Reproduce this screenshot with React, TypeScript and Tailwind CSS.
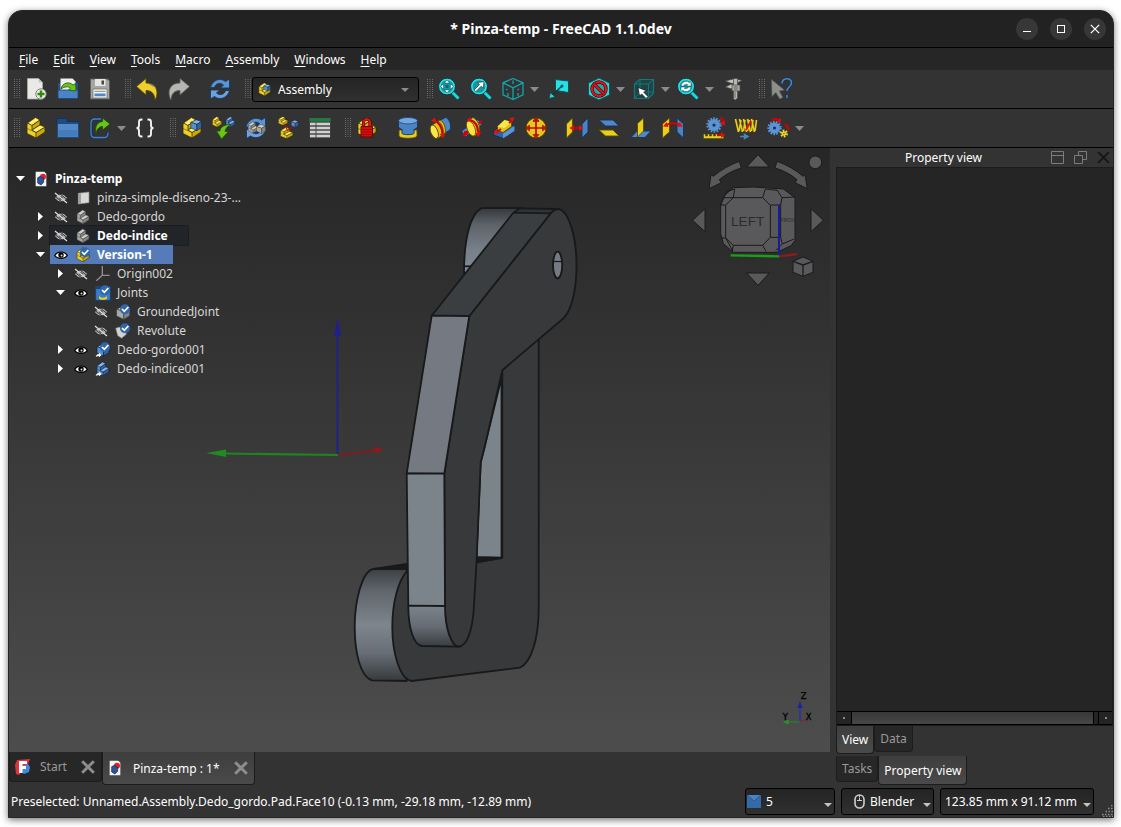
import React from 'react';

type Kids = { children: React.ReactNode };

const YELLOW = ['#fdee6a', '#ecd02a', '#c9a90e', '#3a3000'];
const BLUE = ['#8db6e6', '#568fd0', '#33639f', '#0b1d35'];
const GRAY = ['#cfcfcd', '#a9a9a6', '#858583', '#3a3a39'];

function Icon({ children, size = 24 }: Kids & { size?: number }) {
  return (
    <svg width={size} height={size} viewBox="0 0 24 24" fill="none" aria-hidden="true" className="shrink-0">
      {children}
    </svg>
  );
}

function Block({ c, t }: { c: string[]; t?: string }) {
  return (
    <g transform={t} stroke={c[3]} strokeWidth="0.8" strokeLinejoin="round">
      <path d="M3 8V17.500l9 4.500 9-6V11l-5-2V4.500L11.500 1.500z" fill={c[1]} />
      <path d="M12 22l9-6v-5l-9 5.500z" fill={c[2]} />
      <path d="M3.500 7L11.500 1.500 16 4 8 9.500z" fill={c[0]} />
      <path d="M8 9.500L16 4v5L8 14z" fill={c[2]} />
      <path d="M8 14l8-5 5 2-9 5.500z" fill={c[0]} />
      <path d="M3 12.500l9 4" strokeWidth="0.500" />
    </g>
  );
}

function Cube({ c, t }: { c: string[]; t?: string }) {
  return (
    <g transform={t} stroke={c[3]} strokeWidth="0.9" strokeLinejoin="round">
      <path d="M3 7l9-4 9 3-8 4.500z" fill={c[0]} />
      <path d="M3 7l10 3.500V21L3 16.500z" fill={c[1]} />
      <path d="M13 10.500L21 6v10l-8 5z" fill={c[2]} />
    </g>
  );
}

function Gear({ cx, cy, r, fill, stroke }: { cx: number; cy: number; r: number; fill: string; stroke: string }) {
  return (
    <g>
      <circle cx={cx} cy={cy} r={r} stroke={fill} strokeWidth="2.400" strokeDasharray="1.600 1.300" />
      <circle cx={cx} cy={cy} r={r - 0.5} fill={fill} />
      <circle cx={cx} cy={cy} r={r * 0.25} fill={stroke} />
    </g>
  );
}

function Lens({ children }: Kids) {
  return (
    <Icon>
      <path d="M15 15l7 7" stroke="#0b4a4e" strokeWidth="4.200" />
      <path d="M15 15l6.500 6.500" stroke="#1fd5da" strokeWidth="2.800" />
      <circle cx="10" cy="9.500" r="8.300" fill="#12989e" stroke="#0a3f43" strokeWidth="1" />
      <circle cx="10" cy="9.500" r="7.100" stroke="#30dfe3" strokeWidth="1.500" />
      {children}
    </Icon>
  );
}

const icons = {
  newDoc: (
    <Icon>
      <path d="M3.500 1.500h11l4 4V22h-15z" fill="#e9eae6" stroke="#a9aaa6" strokeWidth="0.800" />
      <path d="M14.500 1.500l4 4h-4z" fill="#c4c6c1" />
      <circle cx="17" cy="17" r="5.200" fill="#eceeea" stroke="#7e807b" />
      <path d="M17 13.500v7M13.500 17h7" stroke="#2f8a0a" strokeWidth="2.400" />
    </Icon>
  ),
  open: (
    <Icon>
      <path d="M2 6h20v15.500H2z" fill="#24508c" />
      <path d="M4.500 1.500h12l3 3V15h-15z" fill="#f0f1ee" />
      <path d="M2 13h20v8.500H2z" fill="#4a83c6" stroke="#1c4478" strokeWidth="0.800" />
      <path d="M5 12c1-6 8-8 12-4l2.500-1.500.5 7.500-7.500-1 2-1.800c-2-2.200-6-1.700-9.500.8z" fill="#6cc417" stroke="#23600a" strokeWidth="0.900" />
    </Icon>
  ),
  save: (
    <Icon>
      <path d="M2.500 2h17l2 2v18h-19z" fill="#a4a6a1" stroke="#5d5f5a" />
      <path d="M7 2h10.500v7H7z" fill="#e6e7e4" />
      <path d="M13.500 3.500h2.500v4h-2.500z" fill="#454743" />
      <path d="M5 12h14v9H5z" fill="#f2f3f1" stroke="#6b6d68" strokeWidth="0.700" />
      <path d="M6.500 14.300h11" stroke="#8b8d88" />
      <path d="M6.500 16.500h11v2.800h-11z" fill="#4d86cc" />
    </Icon>
  ),
  undo: (
    <Icon>
      <path d="M1.500 9.500L11 1.500V6c7 0 11 4 11 10 0 2.500-.8 5-2 7-.5-6-3-9.500-9-9.500v4.500z" fill="#efcf2a" stroke="#5c4a00" strokeWidth="0.900" />
      <path d="M13 6.500c4 .5 7 2 8.500 5L17 9z" fill="#85857c" />
    </Icon>
  ),
  redo: (
    <Icon>
      <path d="M22.500 9.500L13 1.500V6C6 6 2 10 2 16c0 2.500.8 5 2 7 .5-6 3-9.500 9-9.500v4.500z" fill="#b4b6b2" stroke="#5b5d59" strokeWidth="0.900" />
    </Icon>
  ),
  refresh: (
    <Icon>
      <path d="M2.500 10.500C4 3.500 12 0 17.500 4.500L21.500 2v9h-9l3-3c-3.500-3-8-1.500-9 2.500z" fill="#5b93d3" stroke="#173a66" strokeWidth="0.900" />
      <path d="M21.500 13.500c-1.500 7-9.500 10.500-15 6L2.500 22v-9h9l-3 3c3.500 3 8 1.500 9-2.500z" fill="#6fa2dc" stroke="#173a66" strokeWidth="0.900" />
    </Icon>
  ),
  fitAll: (
    <Lens>
      <path d="M10 3l2.500 3h-5zM10 16l2.500-3h-5zM3.500 9.500l3-2.500v5zM16.500 9.500l-3-2.500v5z" fill="#fff" stroke="#134" strokeWidth="0.400" />
      <path d="M8.500 8h3v3h-3z" fill="#0a6a70" />
    </Lens>
  ),
  fitSelection: (
    <Lens>
      <path d="M5 13l5.500-5.500-2-2 6.500-.8-.8 6.500-2-2L6.700 14.700z" fill="#fff" stroke="#123" strokeWidth="0.600" />
    </Lens>
  ),
  isoCube: (
    <Icon>
      <path d="M12 1.500l10 4.300v12L12 22.500 2 17.800v-12zM2 5.800l10 5 10-5M12 10.800v11.700" stroke="#12a5ab" strokeWidth="1.300" />
      <path d="M12 3.500v3.500M5 12l1.500 1M18 12l-1.500 1M7 16v3M17 16v3" stroke="#12a5ab" strokeWidth="1.300" />
    </Icon>
  ),
  alignView: (
    <Icon>
      <path d="M8.500 2.500L21.500 4v11.500l-13-2z" fill="#27dfe4" stroke="#0a5357" />
      <path d="M15.500 8.500L5.500 18" stroke="#063c3f" strokeWidth="1.300" />
      <path d="M2 21.500l1.500-6 4.500 4.500z" fill="#27cfd4" stroke="#0a4144" strokeWidth="0.700" />
      <circle cx="15" cy="9" r="1.500" fill="#0a5357" />
    </Icon>
  ),
  drawStyle: (
    <Icon>
      <path d="M12 1l10.500 5v12L12 23 1.500 18V6z" fill="#25d8de" stroke="#0a5357" />
      <circle cx="12" cy="12" r="7" fill="#1aa9af" stroke="#4a0000" strokeWidth="3.400" />
      <circle cx="12" cy="12" r="7" stroke="#e0141a" strokeWidth="2.200" />
      <path d="M7 7l10 10" stroke="#4a0000" strokeWidth="3.200" />
      <path d="M7 7l10 10" stroke="#e0141a" strokeWidth="2.200" />
    </Icon>
  ),
  selectBox: (
    <Icon>
      <path d="M2.500 7l5-4.500h14V16l-5 5.500h-14z" fill="#1e4446" stroke="#13787c" strokeWidth="1.200" />
      <path d="M2.500 7h14v14.500M16.500 7l5-4.500M8 3v12l-5 6M8 15h13" stroke="#13787c" strokeWidth="1" />
      <path d="M6 10.500l1.500 8.500 2.200-2 4.300 4.500 2-2-4.300-4.300 2.800-1.400z" fill="#fff" stroke="#111" strokeWidth="0.700" />
    </Icon>
  ),
  zoomSync: (
    <Lens>
      <path d="M5 9a5 5 0 018.500-3.200L15 4.500v4.500h-4.500l1.300-1.300A3 3 0 007.500 9zM15 10a5 5 0 01-8.500 3.200L5 14.500V10h4.500l-1.300 1.300A3 3 0 0012.500 10z" fill="#fff" stroke="#0a5357" strokeWidth="0.500" />
    </Lens>
  ),
  caliper: (
    <Icon>
      <path d="M11.500 1.500h4V21l-2 2-2-1z" fill="#b6b8b3" stroke="#4a4b48" strokeWidth="0.700" />
      <path d="M3.500 4l8-2v4.500l-3-.5zM3.500 10l5-2.500h3V12l-3-.5zM15.500 2.500l4.500 1-4.500 2z" fill="#c4c6c1" stroke="#4a4b48" strokeWidth="0.600" />
      <path d="M10 8h8v6h-8z" fill="#a5a7a2" stroke="#4a4b48" strokeWidth="0.700" />
      <path d="M12 16h2M12 18h2M12 20h2M12 10h3.500M12 12h3.500" stroke="#555753" strokeWidth="0.800" />
    </Icon>
  ),
  whatsThis: (
    <Icon>
      <path d="M2.500 2.500l.5 17 3.800-4 4 6.500 3-1.700-3.500-6.300 5-1z" fill="#8d8f8b" stroke="#5a5b58" strokeWidth="0.700" />
      <path d="M13 6.500c0-6 9.500-6.500 9.500-.8 0 4-4.500 4-4.500 8.300M18 18v3" stroke="#16325a" strokeWidth="3" />
      <path d="M13 6.500c0-6 9.500-6.500 9.500-.8 0 4-4.500 4-4.500 8.300M18 18v3" stroke="#4f86c6" strokeWidth="1.500" />
    </Icon>
  ),
  part: (
    <Icon>
      <Block c={YELLOW} />
    </Icon>
  ),
  folder: (
    <Icon>
      <path d="M1 2.500h9l1.500 3H23v5H1z" fill="#1f4a86" stroke="#12305c" strokeWidth="0.800" />
      <path d="M1.500 7.500h21v14h-21z" fill="#5289c7" stroke="#1e4a83" />
      <path d="M2.500 14h19v6.500h-19z" fill="#447bbb" />
    </Icon>
  ),
  link: (
    <Icon>
      <path d="M13 3H6.500A3.500 3.500 0 003 6.500V18a3.500 3.500 0 003.500 3.500h10A3.500 3.500 0 0020 18v-1.500" stroke="#16325a" strokeWidth="3" />
      <path d="M13 3H6.500A3.500 3.500 0 003 6.500V18a3.500 3.500 0 003.500 3.500h10A3.500 3.500 0 0020 18v-1.500" stroke="#4a80bd" strokeWidth="1.300" />
      <path d="M8 17.500C6.500 10 9.500 6 14.500 5.500V2L22 8l-7.500 6v-3.500C11.500 10.500 9 12.500 8 17.500z" fill="#6cc417" stroke="#1d5208" strokeWidth="0.900" />
    </Icon>
  ),
  braces: (
    <Icon>
      <path d="M9.500 3.500H8.500C6.500 3.500 6 4.300 6 6v3.200C6 11 5.200 12 3.500 12c1.700 0 2.500 1 2.500 2.800V18c0 1.700.5 2.500 2.500 2.500h1M14.500 3.500h1C17.500 3.500 18 4.300 18 6v3.200c0 1.800.8 2.800 2.500 2.800-1.700 0-2.500 1-2.500 2.800V18c0 1.700-.5 2.500-2.500 2.500h-1" stroke="#f2f2f2" strokeWidth="1.900" />
    </Icon>
  ),
  assembly: (
    <Icon>
      <Block c={YELLOW} />
      <Cube c={BLUE} t="translate(9 2) scale(.6)" />
    </Icon>
  ),
  insert: (
    <Icon>
      <Block c={YELLOW} t="translate(-1 0) scale(.5)" />
      <Block c={BLUE} t="translate(12.500 0) scale(.5)" />
      <path d="M4.500 15h3.500c0-3 3-6.500 11-6.500-4 2-5.500 4-6 7h3.500L9.500 23z" fill="#6cc417" stroke="#1d5208" strokeWidth="0.800" />
    </Icon>
  ),
  solve: (
    <Icon>
      <path d="M2 11C3.500 3.500 12 0 17.500 4L21.500 1.500v9h-9l3-3c-3.500-2.500-8-1-9 3.500z" fill="#5b93d3" stroke="#173a66" strokeWidth="0.900" />
      <path d="M22 13c-1.500 7.500-10 11-15.500 7L2.500 22.500v-9h9l-3 3c3.500 2.500 8 1 9-3.500z" fill="#6fa2dc" stroke="#173a66" strokeWidth="0.900" />
      <Block c={GRAY} t="translate(2.500 5) scale(.55)" />
      <Cube c={GRAY} t="translate(11 7) scale(.5)" />
    </Icon>
  ),
  explode: (
    <Icon>
      <Block c={YELLOW} t="translate(1 0) scale(.5 .42)" />
      <Cube c={BLUE} t="translate(14 3) scale(.4)" />
      <Block c={YELLOW} t="translate(2.500 10.500) scale(.68 .55)" />
      <path d="M8.500 8l3 6.500 6-4.500" stroke="#d40000" strokeWidth="1" />
    </Icon>
  ),
  bom: (
    <Icon>
      <path d="M1.500 2h21v20h-21z" fill="#4a4a4a" />
      <path d="M1.500 2h21v3.500h-21z" fill="#1f7a45" />
      <path d="M2 8h20M2 12h20M2 16h20M2 20h20" stroke="#d0d0d4" strokeWidth="2.600" />
      <path d="M8 6.500v15.500" stroke="#4a4a4a" strokeWidth="1" />
    </Icon>
  ),
  ground: (
    <Icon>
      <Block c={YELLOW} />
      <path d="M8.500 11V6.500a3 3 0 016.500 0V11" stroke="#5e0000" strokeWidth="3.200" />
      <path d="M8.500 11V6.500a3 3 0 016.500 0V11" stroke="#e01818" strokeWidth="1.900" />
      <path d="M6 10.500h11.500v10.500H6z" fill="#cf1010" stroke="#6d0000" />
      <path d="M7 13.500h9.500M7 16h9.500M7 18.500h9.500" stroke="#a00000" strokeWidth="0.800" />
    </Icon>
  ),
  fixed: (
    <Icon>
      <path d="M3 14h18v6c0 3-18 3-18 0z" fill="#e8cf1f" stroke="#5c4a00" strokeWidth="0.900" />
      <path d="M2.500 4.500v6c0 2 3.500 2.800 3.500 2.800v4c0 1.800 12 1.800 12 0v-4s3.500-.8 3.500-2.800v-6z" fill="#4a83c4" stroke="#14325c" strokeWidth="0.900" />
      <ellipse cx="12" cy="4.700" rx="9.500" ry="3.200" fill="#75a6e0" stroke="#1d467b" strokeWidth="0.800" />
    </Icon>
  ),
  revolute: (
    <Icon>
      <path d="M11 5l6.500-3.500c3.500.5 6.500 8 4.500 12.500L16 17.500z" fill="#4f88ca" stroke="#14325c" strokeWidth="0.900" />
      <path d="M3.500 9.500L12 4c4 1.500 6.500 9 5 13.500L9.500 22.500z" fill="#dfc21a" stroke="#5c4a00" strokeWidth="0.900" />
      <path d="M10 5c4 2 6.500 9 5 14" stroke="#5c4a00" strokeWidth="0.800" />
      <ellipse cx="6.300" cy="15.800" rx="3.500" ry="7" transform="rotate(-22 6.300 15.800)" fill="#fbe64b" stroke="#5c4a00" strokeWidth="0.900" />
      <path d="M6 4.500c5 1.500 8.500 7 8.500 14" stroke="#c80000" strokeWidth="2.200" />
      <path d="M3 5l3.500-3.500 2.500 5.500zM11.500 18l5.500-.5-2 5z" fill="#e01010" />
    </Icon>
  ),
  cylindrical: (
    <Icon>
      <path d="M1.500 15L18 3.500l4 5L5.500 21z" fill="#5089cb" stroke="#14325c" strokeWidth="0.900" />
      <path d="M8 5l5-3.500c4.500 2 7.500 9 6.500 14.500l-5 4.500z" fill="#e2c51a" stroke="#5c4a00" strokeWidth="0.900" />
      <ellipse cx="11" cy="12.500" rx="3.800" ry="8" transform="rotate(-22 11 12.500)" fill="#f9e345" stroke="#5c4a00" strokeWidth="0.800" />
      <path d="M10 4c5 1.500 8 6 8 12.500" stroke="#c80000" strokeWidth="2.200" />
      <path d="M6.500 4.500L10 1l2 5zM15 17l6-1-2.500 5z" fill="#e01010" />
      <path d="M3 20l5-4M19 7.500L22 5" stroke="#d40000" strokeWidth="2.400" />
      <circle cx="6" cy="17" r="2.300" fill="#d40000" />
    </Icon>
  ),
  slider: (
    <Icon>
      <path d="M1.500 15l11-8 10 3v5L11 22.500l-9.500-3.500z" fill="#2f62a5" stroke="#10294d" strokeWidth="0.900" />
      <path d="M11 17.500L22.500 10v5L11 22.500z" fill="#5b93d3" />
      <path d="M5.500 10.500l7-6.500 7 2v4.500L11 16.500l-5.500-2z" fill="#e2c51a" stroke="#5c4a00" strokeWidth="0.900" />
      <path d="M5.500 10.500l7-6.500 7 2-7 6z" fill="#fbe64b" />
      <path d="M4 16.500l5-3.500M17 7l3.500-3" stroke="#d40000" strokeWidth="2" />
      <path d="M1.500 18l2-5 3.500 4.500zM22.500 1.500l-5.500.5 3.500 4z" fill="#e01010" />
    </Icon>
  ),
  ball: (
    <Icon>
      <circle cx="12" cy="12" r="10" fill="#e5c81c" stroke="#5c4a00" />
      <path d="M5 12h14M12 5v14" stroke="#c80000" strokeWidth="1.700" />
      <path d="M12 1.500l3 4H9zM12 22.500l3-4H9zM1.500 12l4-3v6zM22.500 12l-4-3v6z" fill="#e01010" stroke="#7a0000" strokeWidth="0.500" />
      <path d="M9 4.500c1.500-1 4.500-1 6 0" stroke="#c80000" />
    </Icon>
  ),
  distance: (
    <Icon>
      <path d="M1.500 8L7.500 2v14l-6 6z" fill="#e8cf1f" stroke="#5c4a00" strokeWidth="0.900" />
      <path d="M17 8l6-6v14l-6 6z" fill="#4a83c4" stroke="#14325c" strokeWidth="0.900" />
      <path d="M7 12h9" stroke="#d40000" strokeWidth="1.900" />
      <path d="M4.500 12L9 9v6zM18.500 12L14 9v6z" fill="#e01010" />
    </Icon>
  ),
  parallel: (
    <Icon>
      <path d="M2 4h14l6 6H8.500z" fill="#4f88ca" stroke="#14325c" strokeWidth="0.900" />
      <path d="M2 14h14l6 6H8.500z" fill="#e8cf1f" stroke="#5c4a00" strokeWidth="0.900" />
    </Icon>
  ),
  perpendicular: (
    <Icon>
      <path d="M8 15h14l-6 6.500H2z" fill="#4f88ca" stroke="#14325c" strokeWidth="0.900" />
      <path d="M8.500 7.500L14.500 2v13l-6 6z" fill="#e8cf1f" stroke="#5c4a00" strokeWidth="0.900" />
    </Icon>
  ),
  angle: (
    <Icon>
      <path d="M1.500 8l7-6v14l-7 6z" fill="#e8cf1f" stroke="#5c4a00" strokeWidth="0.900" />
      <path d="M16 2l6.500 6v14L16 16z" fill="#4a83c4" stroke="#14325c" strokeWidth="0.900" />
      <path d="M5 9c5-2.500 9-2.500 14 0" stroke="#d40000" strokeWidth="1.800" />
      <path d="M2 10.500l3.500-4.500 2 5zM22 10.500L18.500 6l-2 5z" fill="#e01010" />
    </Icon>
  ),
  rack: (
    <Icon>
      <Gear cx={12} cy={9} r={6.5} fill="#5b93d3" stroke="#14325c" />
      <path d="M1.500 18v4.500h20V20h-2v-2h-2v2h-2v-2h-2v2h-2v-2h-2v2h-2v-2h-2v2h-2v-2z" fill="#e8cf1f" stroke="#5c4a00" strokeWidth="0.600" />
      <path d="M18 2c3 1 4 3.500 3.500 6M15 19h5" stroke="#d40000" strokeWidth="2.200" />
      <path d="M18 7l4.500 3 .5-5zM19 16l4 3-4 3z" fill="#e01010" />
    </Icon>
  ),
  screw: (
    <Icon>
      <path d="M1.500 3l3 13M5.500 3l3 13M9.500 3l3 13M13.500 3l3 13M17.500 3l3 13M5 15L7 4M9.500 15L11 4M13.500 15l2-11M17.500 15l1.500-11M21 15l1.500-11" stroke="#5c4a00" strokeWidth="2.600" />
      <path d="M1.500 3l3 13M5.500 3l3 13M9.500 3l3 13M13.500 3l3 13M17.500 3l3 13M5 15L7 4M9.500 15L11 4M13.500 15l2-11M17.500 15l1.500-11M21 15l1.500-11" stroke="#e8cf1f" strokeWidth="1.500" />
      <path d="M12 14l5-9" stroke="#e01010" strokeWidth="1.800" />
      <path d="M6 20.500h5M10.500 18.500l3.500 2-3.500 2z" stroke="#4a83c4" strokeWidth="1.500" fill="#4a83c4" />
    </Icon>
  ),
  gears: (
    <Icon>
      <Gear cx={8.5} cy={12} r={6} fill="#5b93d3" stroke="#14325c" />
      <Gear cx={18} cy={17.500} r={2.800} fill="#f3da2a" stroke="#5c4a00" />
      <path d="M6 4.500c2.500-2 5-2 7 0M18.500 8.500c3 1 4 3 4 5.500" stroke="#d40000" strokeWidth="2.200" />
      <path d="M15 2l-.5 5-4-1.500z" fill="#e01010" />
    </Icon>
  ),
};

function Tool({ name, label }: { name: keyof typeof icons; label: string }) {
  return (
    <button type="button" aria-label={label} className="flex h-8 w-8 shrink-0 items-center justify-center">
      {icons[name]}
    </button>
  );
}

function Grip() {
  return (
    <svg width="6" height="20" viewBox="0 0 6 20" className="shrink-0" aria-hidden="true">
      <path d="M.5 0v20M3 0v20M5.500 0v20" stroke="#6a6a6a" strokeDasharray="1 1" />
    </svg>
  );
}

function Arrow({ label }: { label: string }) {
  return (
    <button type="button" aria-label={label} className="flex h-8 w-2.5 shrink-0 items-center justify-center">
      <svg width="9" height="5" viewBox="0 0 9 5">
        <path d="M0 0h9L4.500 5z" fill="#8b8b8b" />
      </svg>
    </button>
  );
}

function Eye({ on }: { on: boolean }) {
  return on ? (
    <svg width="16" height="16" viewBox="0 0 16 16" fill="none">
      <path d="M1 8.500C3.500 3 12.500 3 15 8.500c-2.500 4.500-11.500 4.500-14 0z" fill="#000" />
      <path d="M2.500 8.500c2.500-4 8.500-4 11 0-2.500 3-8.500 3-11 0z" fill="#fff" />
      <circle cx="8" cy="8" r="2.700" fill="#000" />
      <circle cx="8.500" cy="8.500" r="1" fill="#ddd" />
    </svg>
  ) : (
    <svg width="16" height="16" viewBox="0 0 16 16" fill="none">
      <path d="M2.500 8c3-4 8-4 11 0-3 4-8 4-11 0z" fill="#a8a8a8" stroke="#c8c8c8" />
      <circle cx="8" cy="8" r="1.800" fill="#444" />
      <path d="M3 4l10.500 8.500M2 6.500l9 7M6 3l8 6.500" stroke="#2a2a2a" strokeWidth="0.900" />
      <path d="M2 3l12 10" stroke="#e2e2e2" strokeWidth="1.200" />
    </svg>
  );
}

function Check() {
  return (
    <g>
      <circle cx="15" cy="8" r="7.500" fill="#2f66ad" />
      <path d="M10.500 7.500l3.500 3.500 6-6.500" stroke="#fff" strokeWidth="2.600" />
    </g>
  );
}

const treeIcons = {
  doc: (
    <Icon size={16}>
      <path d="M4 1h13l3 3v19H4z" fill="#f4f4f2" />
      <circle cx="15" cy="8.500" r="4.500" fill="#e0202a" />
      <path d="M7 10l4-2 5 3v6l-4 4-5-3z" fill="#2b5597" stroke="#10264a" />
    </Icon>
  ),
  mesh: (
    <Icon size={16}>
      <path d="M5 5l16-2v16L5 21z" fill="#d9dad8" stroke="#8a8b88" />
      <path d="M5 5l4 1v14l-4 1z" fill="#9f9f9d" />
    </Icon>
  ),
  body: (
    <Icon size={16}>
      <Block c={GRAY} />
    </Icon>
  ),
  asm: (
    <Icon size={16}>
      <Block c={YELLOW} />
      <Check />
    </Icon>
  ),
  origin: (
    <Icon size={16}>
      <path d="M11 0v14M11 14l11 0M11 14L2 22" stroke="#8f8f8f" strokeWidth="2" />
    </Icon>
  ),
  joints: (
    <Icon size={16}>
      <path d="M1 2h22v21H1z" fill="#3b7cc6" stroke="#143a6c" />
      <path d="M1 2h9l1 4H1z" fill="#1a437c" />
      <path d="M6 15c0 3 3 4 6 4s6-1 6-4v5c0 3-12 3-12 0z" fill="#e8cf1f" />
      <Check />
    </Icon>
  ),
  grounded: (
    <Icon size={16}>
      <Cube c={GRAY} t="translate(-1 0) scale(1.100)" />
      <Check />
    </Icon>
  ),
  revolute: (
    <Icon size={16}>
      <path d="M1 8l5-2 11 4v7l-7 6-6-4z" fill="#d2d3d1" stroke="#777" />
      <Check />
    </Icon>
  ),
  linkedCheck: (
    <Icon size={16}>
      <Cube c={BLUE} />
      <Check />
      <path d="M1 22c1-3 3-4 5-4v-2l4 3.500L6 23v-2z" fill="#fff" />
    </Icon>
  ),
  linked: (
    <Icon size={16}>
      <Block c={BLUE} />
      <path d="M1 22c1-3 3-4 5-4v-2l4 3.500L6 23v-2z" fill="#fff" />
    </Icon>
  ),
};

type Row = {
  level: number;
  open?: boolean;
  eye?: boolean;
  icon: keyof typeof treeIcons;
  text: string;
  look?: 'bold' | 'hover' | 'selected';
};

const rows: Row[] = [
  { level: 0, open: true, icon: 'doc', text: 'Pinza-temp', look: 'bold' },
  { level: 1, eye: false, icon: 'mesh', text: 'pinza-simple-diseno-23-...' },
  { level: 1, open: false, eye: false, icon: 'body', text: 'Dedo-gordo' },
  { level: 1, open: false, eye: false, icon: 'body', text: 'Dedo-indice', look: 'hover' },
  { level: 1, open: true, eye: true, icon: 'asm', text: 'Version-1', look: 'selected' },
  { level: 2, open: false, eye: false, icon: 'origin', text: 'Origin002' },
  { level: 2, open: true, eye: true, icon: 'joints', text: 'Joints' },
  { level: 3, eye: false, icon: 'grounded', text: 'GroundedJoint' },
  { level: 3, eye: false, icon: 'revolute', text: 'Revolute' },
  { level: 2, open: false, eye: true, icon: 'linkedCheck', text: 'Dedo-gordo001' },
  { level: 2, open: false, eye: true, icon: 'linked', text: 'Dedo-indice001' },
];

const indent = ['pl-0', 'pl-5', 'pl-10', 'pl-15'];
const looks = {
  bold: 'font-bold text-white',
  hover: 'bg-[#212429] font-bold text-white outline-1 outline-[#1d1d1f]',
  selected: 'bg-[#557cb9] font-bold text-white',
};

function Tree() {
  return (
    <ul className="relative w-fit pt-[21px] pl-px" aria-label="Model">
      {rows.map((r) => (
        <li key={r.text} className={`flex h-[19px] ${indent[r.level]}`}>
          <button type="button" aria-label={`Expand ${r.text}`} className="flex w-5 items-center justify-center">
            {r.open === true && (
              <svg width="9" height="5" viewBox="0 0 9 5">
                <path d="M0 0h9L4.500 5z" fill="#fff" />
              </svg>
            )}
            {r.open === false && (
              <svg width="5" height="9" viewBox="0 0 5 9">
                <path d="M0 0v9l5-4.500z" fill="#fff" />
              </svg>
            )}
          </button>
          <span className={`flex items-center gap-1.5 pr-5 pl-[3px] ${r.look ? looks[r.look] : 'text-[#d6d6d6]'}`}>
            {r.eye !== undefined && (
              <button type="button" aria-label={`Visibility of ${r.text}`}>
                <Eye on={r.eye} />
              </button>
            )}
            {treeIcons[r.icon]}
            <span className="whitespace-nowrap">{r.text}</span>
          </span>
        </li>
      ))}
    </ul>
  );
}

function Model() {
  return (
    <svg className="absolute inset-0 h-full w-full" viewBox="9 148 821 604" aria-hidden="true">
      <defs>
        <linearGradient id="knuckle" x1="0" y1="0" x2="0" y2="1">
          <stop offset="0" stopColor="#34383b" />
          <stop offset=".25" stopColor="#5d6269" />
          <stop offset=".65" stopColor="#78808a" />
          <stop offset="1" stopColor="#828b93" />
        </linearGradient>
        <linearGradient id="drum" x1="0" y1="0" x2="0" y2="1">
          <stop offset="0" stopColor="#3c4043" />
          <stop offset=".2" stopColor="#60666c" />
          <stop offset=".5" stopColor="#7d858d" />
          <stop offset=".75" stopColor="#686e76" />
          <stop offset="1" stopColor="#35393b" />
        </linearGradient>
        <linearGradient id="tip" x1="0" y1="0" x2="0" y2="1">
          <stop offset="0" stopColor="#7b838b" />
          <stop offset=".5" stopColor="#666c74" />
          <stop offset="1" stopColor="#383c3f" />
        </linearGradient>
      </defs>
      <path d="M337.500 455V334" stroke="#21218a" strokeWidth="2" />
      <path d="M337.500 317l3.500 18.500q-3.500 1.500-7 0z" fill="#20208c" />
      <path d="M338 455l-112-1.500" stroke="#1f861f" strokeWidth="2" />
      <path d="M206 453l20-3.500v7.500z" fill="#218a21" />
      <path d="M338 455l38-4.500" stroke="#7e1d1d" strokeWidth="2" />
      <path d="M372 449.500l4.500-3 7 3-7 4z" fill="#861d1d" />
      <g stroke="#17191a" strokeWidth="1.800" strokeLinejoin="round">
        <path d="M481.700 208H522L470 273h-6C464 240 470 214 481.700 208z" fill="url(#knuckle)" />
        <path d="M464 266.300h8" />
        <path d="M522 208.300l36 .7v5h-45q3-5 9-5.700z" fill="#303436" />
        <path d="M373 569l34-5v8h-34z" fill="#191a1b" />
        <path d="M373.300 569h33.400v112l-35-.7C360 676 354.700 652 354.700 626.700S362 571 373.300 569z" fill="url(#drum)" />
        <path d="M502.300 340h36.400V608c0 32-8 55-18.700 59.700L411.700 681c-12-2-19.400-28-19.400-54.300 0-24 6-46 14.400-55l69-9 26.600-5z" fill="#38393a" />
        <path d="M501.500 378V557.700l-25-.5 4.200-95z" fill="#7c848b" />
        <path d="M476.500 557.300l25 .7-25.500 4z" fill="#191a1b" />
        <path d="M550.700 213.300Q554.500 209 558.300 209C568 210 576.500 235 576.500 265c0 25-5 46-13.200 53.300l-61 52L484 450l-3.300 12.300-4 96-1.400 25L473.700 610c-1.500 21-7 36-14.700 36.700-8 0-14-18-14-40l-.7-133 25-157.700z" fill="#38393a" />
        <path d="M431.700 315.700l81.600-103 37.400.6L469.300 316z" fill="#3a3e41" />
        <path d="M431.700 315.700l37.600.3-25 157.700-37.600-.4z" fill="#757981" />
        <path d="M406.700 473.300l37.600.4.7 132.300-36.700-.3z" fill="#7c848b" />
        <path d="M408.300 605.700L445 606c0 22 6 40 14 40.700l-37.300-.7c-8-1-13.400-18-13.400-40.300z" fill="url(#tip)" />
        <ellipse cx="557.600" cy="265" rx="4.600" ry="13.300" fill="#747a81" />
        <path d="M553 261.500h9" strokeWidth="1.200" />
      </g>
    </svg>
  );
}

function NavCube() {
  return (
    <svg className="absolute top-0 right-0" width="150" height="147" viewBox="0 9 450 441">
      <g fill="#59595b" stroke="#1b1b1b" strokeWidth="3" strokeLinejoin="round">
        <path d="M234 29l34 37h-68zM234 421l34-37h-68zM38 226l37-35v69zM430 226l-37-35v69z" />
        <circle cx="406" cy="52" r="19" />
        <path d="M178 49l6 20q-38 11-66 35l6 9-37 18 6-42 7 5Q134 65 178 49zM291 49l-6 20q38 11 66 35l-6 9 37 18-7-42-6 5Q336 65 291 49z" />
        <path d="M122 180l8-26 30-26 60-2 90 6 35 26v128l-12 16-42 20H160l-30-26-8-30z" />
        <path d="M137 180l23-22h88l23 23v96l-23 24h-88l-23-22z" />
        <path d="M160 158l-30 0M137 180h-15M122 180l18-40 24-8M160 158l4-26M248 158l8-26 36 4 14 22-4 22h-31M306 158l39-2M302 181v96l-31 0M302 277l5 20 35-15M137 279h-15M160 301l-4 18M137 279l22 40M248 301l10 18M307 297l-20 20" fill="none" />
        <path d="M369 336l30 13v33l-30 12-30-12v-33z" />
        <path d="M339 349l30 11 30-11M369 360v34" fill="none" strokeWidth="4" />
      </g>
      <text x="203" y="243" textAnchor="middle" fontSize="41" fill="#2b2b2c" className="font-['Liberation_Sans']">
        LEFT
      </text>
      <text x="302" y="232" fontSize="15" fill="#2b2b2c" className="font-['Liberation_Sans']">
        FRONT
      </text>
      <path d="M297 333V180" stroke="#1a1aa0" strokeWidth="6" />
      <path d="M152 331l146 3" stroke="#18a018" strokeWidth="7" />
      <path d="M299 334l52-7" stroke="#8c1c1c" strokeWidth="7" />
    </svg>
  );
}

function AxisCross() {
  return (
    <svg className="absolute right-0 bottom-0" width="50" height="60" viewBox="150 36 150 180">
      <path d="M210 125V80" stroke="#3030a0" strokeWidth="5" />
      <path d="M210 64l8 20h-16z" fill="#2020a0" />
      <path d="M210 126h-36" stroke="#2a7a2a" strokeWidth="4" />
      <path d="M158 126l18-7v14z" fill="#1f9a1f" />
      <path d="M212 124l16 0-8-7-8 7 8 7z" fill="#a02020" />
      <g fontSize="25" fill="#000" className="font-['DejaVu_Sans']" stroke="#000">
        <text x="212" y="58">Z</text>
        <text x="158" y="119">Y</text>
        <text x="227" y="119">X</text>
      </g>
    </svg>
  );
}

function Cross({ size, color, width }: { size: number; color: string; width: number }) {
  return (
    <svg width={size} height={size} viewBox="0 0 12 12" fill="none">
      <path d="M1 1l10 10M11 1L1 11" stroke={color} strokeWidth={width} />
    </svg>
  );
}

const menus = ['File', 'Edit', 'View', 'Tools', 'Macro', 'Assembly', 'Windows', 'Help'];

const idleTab = 'rounded-b-sm border border-t-0 border-[#1c1c1c] bg-[#272727] text-[#9a9a9a]';
const activeTab = 'rounded-b-sm border border-t-0 border-[#1c1c1c] bg-linear-to-b from-[#3e3e3e] to-[#4a4a4a] text-white';

function StatusSelect({ label, value, box, pad, children }: { label: string; value: string; box: string; pad: string; children?: React.ReactNode }) {
  return (
    <div className={`relative ${box}`}>
      <select
        aria-label={label}
        className={`h-[27px] w-full appearance-none rounded-[3px] border border-black bg-linear-to-b from-[#242424] to-[#303030] text-white ${pad}`}
      >
        <option>{value}</option>
      </select>
      {children}
      <svg className="pointer-events-none absolute right-[3px] bottom-2" width="8" height="4" viewBox="0 0 8 4">
        <path d="M0 0h8L4 4z" fill="#c4c4c4" />
      </svg>
    </div>
  );
}

export default function App() {
  return (
    <div className="h-screen bg-white pt-2.5 pr-[7px] pb-[9px] pl-2 font-['Noto_Sans',sans-serif] text-xs leading-[19px] text-white">
      <div className="flex h-full flex-col overflow-hidden rounded-t-[14px] border border-[#262626] bg-[#333333] shadow-[0_2px_7px_rgba(0,0,0,0.55)]">
        <header className="relative flex h-[37px] shrink-0 items-center justify-center border-b border-black bg-[#222222]">
          <h1 className="text-sm font-bold">* Pinza-temp - FreeCAD 1.1.0dev</h1>
          <div className="absolute right-[7px] flex gap-3">
            <button type="button" aria-label="Minimize" className="flex size-[22px] items-center justify-center rounded-full bg-[#373737]">
              <svg width="8" height="8" viewBox="0 0 8 8">
                <path d="M0 6h8v1H0z" fill="#fff" />
              </svg>
            </button>
            <button type="button" aria-label="Maximize" className="flex size-[22px] items-center justify-center rounded-full bg-[#373737]">
              <span className="size-2 border border-white" />
            </button>
            <button type="button" aria-label="Close window" className="flex size-[22px] items-center justify-center rounded-full bg-[#373737]">
              <Cross size={10} color="#fff" width={1.500} />
            </button>
          </div>
        </header>

        <nav className="flex h-[22px] shrink-0 items-center gap-[15px] bg-[#262626] pl-2.5">
          {menus.map((m) => (
            <button key={m} type="button">
              <span className="underline underline-offset-2">{m[0]}</span>
              {m.slice(1)}
            </button>
          ))}
        </nav>

        <div className="flex h-[39px] shrink-0 items-center border-b border-black pl-[5px]" role="toolbar" aria-label="File">
          <Grip />
          <Tool name="newDoc" label="New" />
          <Tool name="open" label="Open" />
          <Tool name="save" label="Save" />
          <div className="w-[9px]" />
          <Grip />
          <Tool name="undo" label="Undo" />
          <Tool name="redo" label="Redo" />
          <div className="w-[9px]" />
          <Tool name="refresh" label="Refresh" />
          <div className="w-[9px]" />
          <Grip />
          <div className="relative ml-px w-[167px]">
            <select
              aria-label="Workbench"
              className="h-[25px] w-full appearance-none rounded-[3px] border border-black bg-linear-to-b from-[#242424] to-[#303030] pl-[25px] text-white"
            >
              <option>Assembly</option>
            </select>
            <span className="pointer-events-none absolute top-[5px] left-[5px]">
              <Icon size={15}>
                <Block c={YELLOW} />
                <Cube c={BLUE} t="translate(9 2) scale(.6)" />
              </Icon>
            </span>
            <svg className="pointer-events-none absolute top-[11px] right-2.5" width="8" height="4" viewBox="0 0 8 4">
              <path d="M0 0h8L4 4z" fill="#8b8b8b" />
            </svg>
          </div>
          <div className="w-2" />
          <Grip />
          <Tool name="fitAll" label="Fit all" />
          <Tool name="fitSelection" label="Fit selection" />
          <Tool name="isoCube" label="Isometric" />
          <Arrow label="Standard views" />
          <div className="w-1" />
          <Tool name="alignView" label="Align to selection" />
          <div className="w-2" />
          <Tool name="drawStyle" label="Draw style" />
          <Arrow label="Draw styles" />
          <div className="w-[3px]" />
          <Tool name="selectBox" label="Bounding box" />
          <Arrow label="Selection views" />
          <div className="w-0.5" />
          <Tool name="zoomSync" label="Sync view" />
          <Arrow label="Selection filters" />
          <div className="w-1" />
          <Tool name="caliper" label="Measure" />
          <div className="w-[9px]" />
          <Grip />
          <Tool name="whatsThis" label="Help pointer" />
        </div>

        <div className="flex h-[39px] shrink-0 items-center border-b border-black pl-[5px]" role="toolbar" aria-label="Assembly">
          <Grip />
          <Tool name="part" label="Part" />
          <Tool name="folder" label="Group" />
          <Tool name="link" label="Link" />
          <Arrow label="Link actions" />
          <div className="w-[3px]" />
          <Tool name="braces" label="Variable set" />
          <div className="w-[9px]" />
          <Grip />
          <Tool name="assembly" label="New assembly" />
          <Tool name="insert" label="Insert component" />
          <Tool name="solve" label="Solve" />
          <Tool name="explode" label="Exploded view" />
          <Tool name="bom" label="Bill of materials" />
          <div className="w-[9px]" />
          <Grip />
          <Tool name="ground" label="Toggle grounded" />
          <div className="w-[9px]" />
          <Tool name="fixed" label="Fixed joint" />
          <Tool name="revolute" label="Revolute joint" />
          <Tool name="cylindrical" label="Cylindrical joint" />
          <Tool name="slider" label="Slider joint" />
          <Tool name="ball" label="Ball joint" />
          <div className="w-[9px]" />
          <Tool name="distance" label="Distance joint" />
          <Tool name="parallel" label="Parallel joint" />
          <Tool name="perpendicular" label="Perpendicular joint" />
          <Tool name="angle" label="Angle joint" />
          <div className="w-[9px]" />
          <Tool name="rack" label="Rack and pinion" />
          <Tool name="screw" label="Screw joint" />
          <Tool name="gears" label="Gears" />
          <Arrow label="Gear joints" />
        </div>

        <div className="flex min-h-0 flex-1 gap-1.5">
          <main className="flex min-w-0 flex-1 flex-col">
            <div className="relative min-h-0 flex-1 bg-linear-to-b from-[#272727] to-[#4d4d4d]">
              <Model />
              <Tree />
              <NavCube />
              <AxisCross />
            </div>
            <div className="flex h-[33px] shrink-0 items-start">
              <div className={`flex h-[30px] items-center pr-1.5 pl-[5px] ${idleTab}`}>
                <svg width="15" height="16" viewBox="0 0 15 16">
                  <path d="M2 1l13-1-2 5-9 11-3-1-1-9z" fill="#e0343c" />
                  <path d="M8 7l5-2 2 3-1 5-5 2-3-2z" fill="#3f8ae0" />
                  <path d="M4 2h8v3H7.500v2H11v3H7.500v4H4z" fill="#fff" />
                </svg>
                <button type="button" className="ml-2.5">Start</button>
                <button type="button" aria-label="Close Start" className="ml-3.5">
                  <Cross size={14} color="#8d8d8d" width={2.500} />
                </button>
              </div>
              <div className={`flex h-[33px] items-center pr-1.5 pl-1 ${activeTab}`}>
                {treeIcons.doc}
                <button type="button" className="ml-2.5">Pinza-temp : 1*</button>
                <button type="button" aria-label="Close Pinza-temp" className="ml-3.5">
                  <Cross size={14} color="#8d8d8d" width={2.500} />
                </button>
              </div>
            </div>
          </main>

          <aside className="flex w-[277px] shrink-0 flex-col">
            <div className="flex h-[19px] shrink-0 items-center">
              <h2 className="flex-1 text-center">Property view</h2>
              <div className="flex items-center gap-2.5 pr-[3px]">
                <button type="button" aria-label="Minimize panel">
                  <svg width="13" height="13" viewBox="0 0 13 13" fill="none">
                    <path d="M.5.500h12v12H.5zM.5 4.500h12" stroke="#7c7c7c" />
                  </svg>
                </button>
                <button type="button" aria-label="Float panel">
                  <svg width="13" height="13" viewBox="0 0 13 13" fill="none">
                    <path d="M4.500 4V.5h8v8H9M.5 4.500h8v8h-8z" stroke="#7c7c7c" />
                  </svg>
                </button>
                <button type="button" aria-label="Close panel">
                  <Cross size={13} color="#161616" width={1.800} />
                </button>
              </div>
            </div>
            <section className="flex min-h-0 flex-1 flex-col border border-[#1c1c1c] bg-[#252525]" aria-label="Properties">
              <div className="flex-1" />
              <div className="flex h-[14px] border-y border-black bg-[#242424]">
                <button type="button" aria-label="Scroll left" className="flex w-3.5 items-center justify-center">
                  <span className="size-0.5 bg-[#8a8a8a]" />
                </button>
                <div className="mr-1 flex-1 border-x border-black bg-linear-to-b from-[#383838] to-[#474747]" />
                <button type="button" aria-label="Scroll right" className="flex w-3.5 items-center justify-center border-l border-black">
                  <span className="size-0.5 bg-[#8a8a8a]" />
                </button>
              </div>
            </section>
            <div className="flex h-[30px] shrink-0 items-start">
              <button type="button" className={`h-[28px] px-[5px] ${activeTab}`}>View</button>
              <button type="button" className={`h-[26px] px-[5px] ${idleTab}`}>Data</button>
            </div>
            <div className="flex h-[29px] shrink-0 items-start">
              <button type="button" className={`h-[26px] px-[5px] ${idleTab}`}>Tasks</button>
              <button type="button" className={`h-[29px] px-[5px] ${activeTab}`}>Property view</button>
            </div>
          </aside>
        </div>

        <footer className="relative flex h-8 shrink-0 items-center pr-[19px] pl-0.5">
          <p className="min-w-0 flex-1 truncate">Preselected: Unnamed.Assembly.Dedo_gordo.Pad.Face10 (-0.13 mm, -29.18 mm, -12.89 mm)</p>
          <div className="flex gap-1.5">
            <StatusSelect label="Notifications" value="5" box="w-[90px]" pad="pl-5">
              <svg className="pointer-events-none absolute top-[7px] left-0.5" width="14" height="13" viewBox="0 0 14 13">
                <path d="M0 0h14v13H0z" fill="#356aa9" />
                <path d="M0 0l7 6 7-6" fill="#4a82c2" stroke="#2a5891" />
              </svg>
            </StatusSelect>
            <StatusSelect label="Navigation style" value="Blender" box="w-[93px]" pad="pl-7">
              <svg className="pointer-events-none absolute top-[6px] left-[13px]" width="11" height="15" viewBox="0 0 11 15" fill="none">
                <rect x="1" y="1" width="9" height="13" rx="4.500" stroke="#d0d0d0" strokeWidth="1.600" />
                <path d="M5.500 3.500v3M5.500 1v2M3 6.500h5" stroke="#d0d0d0" />
              </svg>
            </StatusSelect>
            <StatusSelect label="View dimensions" value="123.85 mm x 91.12 mm" box="w-[154px]" pad="pl-1" />
          </div>
          <svg className="absolute right-0 bottom-0" width="12" height="12" viewBox="0 0 12 12">
            <path d="M10 .5h2M7 3.500h5M4.500 6.500H12M1 9.500h11M2 11.500h10" stroke="#8a8a8a" strokeWidth="1.500" strokeDasharray="1.500 1.500" />
          </svg>
        </footer>
      </div>
    </div>
  );
}
